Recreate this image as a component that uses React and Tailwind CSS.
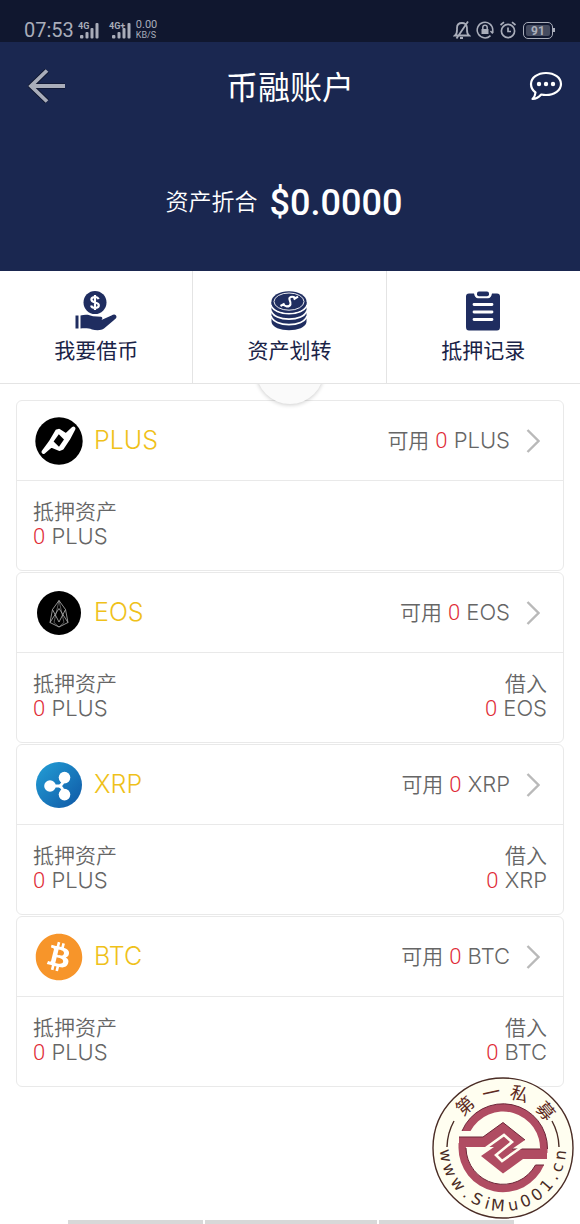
import React from "react";
import { FaBitcoin } from "react-icons/fa";

const PlusLogo = () => (
  <svg viewBox="0 0 48 48" className="w-12 h-12" aria-hidden="true">
    <circle cx="24" cy="24" r="23.7" fill="#000" />
    <path
      d="M8.5 35 L15.5 25.5 L22 14.5 L24 13.8 L31 18.5 L38.5 11.5 L33 22 L27 31 L24.5 32 L16 28.5 Z"
      fill="#fff"
      stroke="#fff"
      strokeWidth="4"
      strokeLinejoin="round"
    />
    <path d="M23.8 17.2 L29 22.6 L24 29.8 L18.6 24.6 Z" fill="#000" />
  </svg>
);

const EosLogo = () => (
  <svg viewBox="0 0 44 44" className="w-11 h-11" aria-hidden="true">
    <circle cx="22" cy="22" r="22" fill="#000" />
    <g fill="none" stroke="#b5b5b5" strokeWidth="0.8" strokeLinejoin="round">
      <path d="M22 9.5 L15.5 18.5 L13 31.5 L22 36 L31 31.5 L28.5 18.5 Z" />
      <path d="M15.5 18.5 L22 31 L28.5 18.5 M13 31.5 L22 17.5 L31 31.5" />
      <path d="M22 9.5 L17 31.5 L22 36 L27 31.5 Z" strokeWidth="0.5" />
    </g>
  </svg>
);

const XrpLogo = () => (
  <svg viewBox="0 0 46 46" className="w-[46px] h-[46px]" aria-hidden="true">
    <defs>
      <linearGradient id="xrp" x1="0" y1="0" x2="1" y2="1">
        <stop offset="0" stopColor="#239fd6" />
        <stop offset="1" stopColor="#0f57a5" />
      </linearGradient>
    </defs>
    <circle cx="23" cy="23" r="23" fill="url(#xrp)" />
    <g fill="#fff">
      <circle cx="14" cy="24" r="5.8" />
      <circle cx="28.5" cy="15.6" r="5.8" />
      <circle cx="28.5" cy="32.6" r="5.8" />
    </g>
    <g fill="none" stroke="#fff" strokeWidth="3">
      <path d="M14 24 H23.5 Q27.5 22 27.5 16" />
      <path d="M23.5 24 Q27.5 26 27.5 32" />
    </g>
  </svg>
);

const BtcLogo = () => <FaBitcoin size={48} color="#f7952a" aria-hidden="true" />;

const HandCoin = () => (
  <svg viewBox="0 0 42 40" className="w-[42px] h-10" aria-hidden="true">
    <circle cx="20" cy="11.5" r="11.5" fill="#1f2d60" />
    <path
      d="M23.6 8.2 C23 6.4 21.6 6 20 6 C18 6 16.4 6.9 16.4 8.6 C16.4 12.6 23.8 10.4 23.8 14.3 C23.8 16.2 22 17 20 17 C18.2 17 16.6 16.4 16.1 14.5 M20 4 V19"
      fill="none"
      stroke="#fff"
      strokeWidth="2.2"
    />
    <path d="M0.5 24.5 H3.5 V37.5 H0.5 Z" fill="#1f2d60" />
    <path
      d="M5.5 24.5 C10 23.2 14 23.4 18 25.3 L26 25.8 C27.6 26 27.9 28.2 26.4 28.9 L36.5 24.4 C39 22.8 41.5 23.4 41.5 26 C41.5 27.2 40 28.2 38.5 29.4 L29 37.5 C26.5 39.6 21 39.6 17 38.4 C14 37.4 12 37.2 5.5 37.4 Z"
      fill="#1f2d60"
    />
  </svg>
);

const Coins = () => (
  <svg viewBox="0 0 36 40" className="w-9 h-10" aria-hidden="true">
    <path d="M0.5 11 V31 C2 42 34 42 35.5 31 V11 Z" fill="#1f2d60" />
    <g fill="none" stroke="#fff" strokeWidth="1.7">
      <path d="M0 14 C3 25.5 33 25.5 36 14" />
      <path d="M0 19.5 C3 31 33 31 36 19.5" />
      <path d="M0 25 C3 36.5 33 36.5 36 25" />
    </g>
    <ellipse cx="18" cy="11" rx="17.6" ry="10.8" fill="#1f2d60" />
    <ellipse cx="18" cy="10.6" rx="15" ry="8.6" fill="none" stroke="#fff" strokeWidth="0.9" />
    <path
      d="M24.5 7 C21 4.6 17.4 6 18.6 8.8 C20 12 20.4 15.6 15.6 15.4 C13.6 15.2 12.6 14 12 12.8 M9.5 15 L13.6 12.6 M22.6 8.4 L27 5.6"
      fill="none"
      stroke="#fff"
      strokeWidth="2.1"
    />
  </svg>
);

const Clipboard = () => (
  <svg viewBox="0 0 36 40" className="w-9 h-10" aria-hidden="true">
    <path d="M4 2.5 H9 Q10 7.2 13 7.2 H23 Q26 7.2 27 2.5 H32 Q35 2.5 35 5.5 V36 Q35 39.5 32 39.5 H4 Q1 39.5 1 36 V5.5 Q1 2.5 4 2.5 Z" fill="#1f2d60" />
    <rect x="12" y="0.5" width="12" height="4.8" rx="2" fill="#1f2d60" />
    <path d="M9 13.5 H27 M9 21 H27 M9 28.5 H27" stroke="#fff" strokeWidth="2.8" strokeLinecap="round" />
  </svg>
);

const Signal = ({ label }) => (
  <svg viewBox="0 0 22 17" className="w-[22px] h-[17px] overflow-visible" aria-hidden="true">
    <g fill="#a9adba">
      <rect x="2" y="13" width="3.4" height="3.4" rx="1" />
      <rect x="7.5" y="10" width="3" height="6.4" rx="1" />
      <rect x="12.5" y="6" width="3" height="10.4" rx="1" />
      <rect x="17.5" y="1" width="3" height="15.4" rx="1" />
    </g>
    <text x={label.length > 2 ? -1 : 0} y="7" fontSize="9" fontWeight="700" fontFamily="Roboto, sans-serif" fill="#a9adba">
      {label}
    </text>
  </svg>
);

const StatusBar = () => (
  <div className="h-[42px] bg-[#10172f] flex items-end justify-between pl-6 pr-[25px] pb-[2px] text-[#a9adba]">
    <div className="flex items-center h-5">
      <span className="text-[20px] leading-5">07:53</span>
      <span className="flex gap-[10px] ml-1">
        <Signal label="4G" />
        <Signal label="4G+" />
      </span>
      <span className="ml-1">
        <span className="block text-[11px] leading-[10px]">0.00</span>
        <span className="block text-[9px] leading-[10px]">KB/S</span>
      </span>
    </div>
    <div className="flex items-center h-5 gap-[5px]">
      <svg viewBox="0 0 18 18" className="w-[18px] h-[18px]" fill="none" stroke="currentColor" strokeWidth="1.8" aria-hidden="true">
        <path d="M2 14.5 H16 C13.5 12.5 14 10 14 7 C14 3.5 11.5 2 9 2 C6.5 2 4 3.5 4 7 C4 10 4.5 12.5 2 14.5 Z M7 17 H10 M15 0.5 L3.5 17.5" />
      </svg>
      <svg viewBox="0 0 18 18" className="w-[18px] h-[18px]" fill="none" stroke="currentColor" strokeWidth="1.5" aria-hidden="true">
        <path d="M14.5 14.6 A7.8 7.8 0 1 1 16.8 9 V12 M14.5 10 L16.8 12.5" />
        <rect x="5.5" y="8" width="7" height="5" fill="currentColor" stroke="none" />
        <path d="M6.8 8.5 V6.5 A2.2 2.2 0 0 1 11.2 6.5 V8.5" />
      </svg>
      <svg viewBox="0 0 18 18" className="w-[18px] h-[18px]" fill="none" stroke="currentColor" strokeWidth="1.7" aria-hidden="true">
        <circle cx="9" cy="10" r="6.6" />
        <path d="M9 6.5 V10.5 H12 M1.5 4 L5 1.2 M16.5 4 L13 1.2" />
      </svg>
      <span className="flex items-center ml-[1px]">
        <span className="w-[30px] h-[17px] rounded-[5px] border border-[#a9adba] p-[2px] flex">
          <span className="flex-1 rounded-[2px] bg-[#454b5f] text-center text-[12px] leading-[12px] font-bold">91</span>
        </span>
        <span className="w-[2px] h-1 bg-[#a9adba]" />
      </span>
    </div>
  </div>
);

const actions = [
  { icon: HandCoin, label: "我要借币" },
  { icon: Coins, label: "资产划转" },
  { icon: Clipboard, label: "抵押记录" },
];

const coins = [
  { symbol: "PLUS", logo: PlusLogo, available: "0", pledged: "0" },
  { symbol: "EOS", logo: EosLogo, available: "0", pledged: "0", borrowed: "0" },
  { symbol: "XRP", logo: XrpLogo, available: "0", pledged: "0", borrowed: "0" },
  { symbol: "BTC", logo: BtcLogo, available: "0", pledged: "0", borrowed: "0" },
];

const Amount = ({ value, unit }) => (
  <span className="whitespace-nowrap text-[22px] font-light">
    <span className="text-[#e02b36] font-[Roboto,sans-serif]">{value}</span> {unit}
  </span>
);

const CoinCard = ({ coin }) => (
  <li className="border border-[#e9e9e9] rounded-md text-[#666] text-[21px] leading-[25px] font-[350]">
    <a href="#" className="flex items-center h-20 border-b border-[#e9e9e9] pl-[18px] pr-[23px]">
      <span className="w-12 flex justify-center">
        <coin.logo />
      </span>
      <span className="ml-[11px] text-[25px] font-light text-[#efc11a]">{coin.symbol}</span>
      <span className="ml-auto">
        可用 <Amount value={coin.available} unit={coin.symbol} />
      </span>
      <svg viewBox="0 0 14 24" className="ml-4 w-[14px] h-6" fill="none" stroke="#b9b9b9" strokeWidth="2.4" aria-hidden="true">
        <path d="M1.5 1 L12.5 12 L1.5 23" />
      </svg>
    </a>
    <div className="flex justify-between h-[89px] pt-[18px] px-4">
      <div>
        <div>抵押资产</div>
        <div><Amount value={coin.pledged} unit="PLUS" /></div>
      </div>
      {coin.borrowed && (
        <div className="text-right">
          <div>借入</div>
          <div><Amount value={coin.borrowed} unit={coin.symbol} /></div>
        </div>
      )}
    </div>
  </li>
);

// [angle on the ring in degrees, half the glyph's advance]
const topGlyphs = [[-132, 9], [-102, 9], [-73, 9], [-41, 9]];
const bottomGlyphs = [
  [173, 6], [158, 6], [142, 6], [129, 2], [117, 5], [106, 2], [95, 7],
  [80, 5], [67, 5], [54, 5], [41, 5], [30, 2], [20, 4], [7, 5],
];

// Lays glyphs round a circle; side is 1 for the upper arc, -1 for the lower one.
const ring = (glyphs, radius, side) => {
  const spots = glyphs.map(([deg, half]) => {
    const a = (deg * Math.PI) / 180;
    const turn = deg + 90 * side;
    const t = (turn * Math.PI) / 180;
    return [
      71 + radius * Math.cos(a) - half * Math.cos(t),
      71 + radius * Math.sin(a) - half * Math.sin(t),
      turn,
    ];
  });
  return {
    x: spots.map((s) => s[0].toFixed(2)).join(" "),
    y: spots.map((s) => s[1].toFixed(2)).join(" "),
    rotate: spots.map((s) => s[2]).join(" "),
  };
};

const Stamp = () => (
  <svg viewBox="0 0 142 142" className="absolute right-[6px] bottom-[5px] w-[142px] h-[142px]">
    <circle cx="71" cy="71" r="70" fill="#fffef0" stroke="#4a2c25" strokeWidth="1.4" />
    <g fill="none" stroke="#4a2c25" strokeWidth="1.4">
      <path d="M15 70 A56 56 0 0 1 22 44" />
      <path d="M127 70 A56 56 0 0 0 120 44" />
    </g>
    <g transform="translate(71 71)">
      <g fill="#b04c62">
        <path d="M-41 -17 A44.5 44.5 0 0 1 44.5 1 V5 L37 3 A37 37 0 0 0 -32.5 -17 Z" />
        <path d="M41 17 A44.5 44.5 0 0 1 -44.5 -1 V-5 L-37 -3 A37 37 0 0 0 32.5 17 Z" />
        <path d="M-44 -11 H-20 L0 -25.5 L22 -8 L9 1 H44 V11 H20 L0 25.5 L-22 8 L-9 -1 H-44 Z" />
      </g>
      <g fill="none" stroke="#6d2638" strokeWidth="1">
        <path d="M-41 -17 A44.5 44.5 0 0 1 44.5 1" />
        <path d="M-44 -11 H-20 L0 -25.5 L22 -8" />
        <path d="M9 1 H37 M-37 0 A37 37 0 0 0 32.5 17 H41" />
      </g>
      <path d="M-20 2 L1 -13 L9 -6 L-7 7 L-1 13 L20 -2" fill="none" stroke="#fffef0" strokeWidth="2.6" />
    </g>
    <text {...ring(topGlyphs, 50, 1)} fontSize="18" fontFamily="'Noto Sans CJK SC', sans-serif" fill="#5e2a22">
      第一私募
    </text>
    <text {...ring(bottomGlyphs, 63, -1)} fontSize="16" fontFamily="'DejaVu Sans', sans-serif" fill="#4a2c25">
      www.SiMu001.cn
    </text>
  </svg>
);

const App = () => (
  <div className="relative min-h-screen flex flex-col bg-white font-[Inter,'Noto_Sans_CJK_SC',sans-serif]">
    <header className="bg-[#1a2750] text-white">
      <div className="font-[Roboto,sans-serif]">
        <StatusBar />
      </div>
      <div className="grid grid-cols-[1fr_auto_1fr] items-center h-[88px] px-[17px]">
        <button type="button" aria-label="返回" className="justify-self-start ml-[11px]">
          <svg viewBox="0 0 38 34" className="w-[38px] h-[34px]" fill="none" aria-hidden="true">
            <path d="M19 1.5 L3 17 L19 32.5 M3 17 H37" stroke="#10172f" strokeWidth="5.5" />
            <path d="M19 1.5 L3 17 L19 32.5 M3 17 H37" stroke="#a9adba" strokeWidth="3.8" />
          </svg>
        </button>
        <h1 className="pt-1 text-[32px] leading-10 font-normal">币融账户</h1>
        <button type="button" aria-label="消息" className="justify-self-end">
          <svg viewBox="0 0 34 30" className="w-[34px] h-[30px]" fill="none" aria-hidden="true">
            <path
              d="M17 2 C25.5 2 32 6.8 32 13 C32 19.2 25.5 24 17 24 C15.3 24 13.7 23.8 12.2 23.5 C10 26 7 27.7 3.5 28 C5.3 26.3 6.3 24.3 6.5 21.5 C3.7 19.5 2 16.5 2 13 C2 6.8 8.5 2 17 2 Z"
              stroke="#fff"
              strokeWidth="2.2"
              strokeLinejoin="round"
            />
            <g fill="#fff">
              <circle cx="10" cy="13" r="2.2" />
              <circle cx="17" cy="13" r="2.2" />
              <circle cx="24" cy="13" r="2.2" />
            </g>
          </svg>
        </button>
      </div>
      <div className="flex items-center justify-center h-[141px] pb-1 pr-3 gap-3 pt-2">
        <span className="text-[23px] font-[350]">资产折合</span>
        <span className="text-[36px] leading-10 font-medium font-[Roboto,sans-serif]">$0.0000</span>
      </div>
    </header>

    <nav className="relative">
      <div className="absolute left-1/2 -bottom-5 -ml-[34px] w-[68px] h-[68px] rounded-full bg-[#fafafa] shadow-[0_1px_4px_rgba(0,0,0,0.2)]" />
      <div className="relative grid grid-cols-3 bg-white border-b border-[#e4e4e4] divide-x divide-[#e4e4e4]">
        {actions.map((a) => (
          <button key={a.label} type="button" className="h-28 flex flex-col items-center pt-5 gap-[6px] text-[21px] leading-7 text-[#1a2347]">
            <a.icon />
            {a.label}
          </button>
        ))}
      </div>
    </nav>

    <ul className="px-4 pt-4 pb-[133px] flex flex-col gap-[1px]">
      {coins.map((c) => (
        <CoinCard key={c.symbol} coin={c} />
      ))}
    </ul>

    <div className="mt-auto h-1 flex gap-[2px] pl-[68px] pr-[66px]">
      <span className="flex-[135] bg-[#d8d8d8]" />
      <span className="flex-[173] bg-[#d8d8d8]" />
      <span className="flex-[135] bg-[#d8d8d8]" />
    </div>
    <Stamp />
  </div>
);

export default App;
